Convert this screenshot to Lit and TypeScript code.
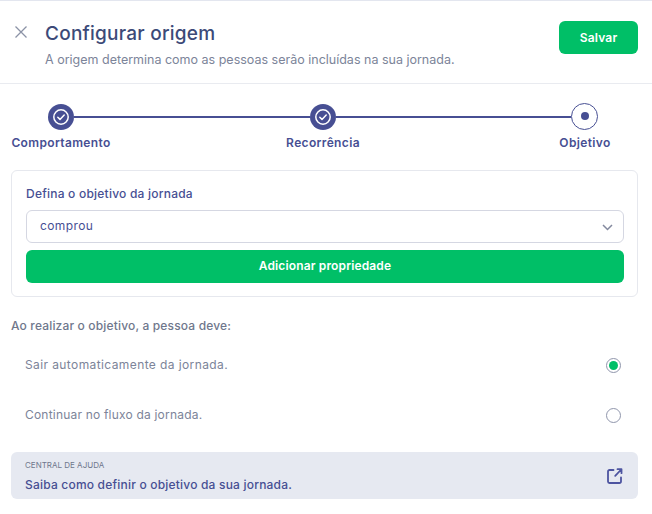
import { LitElement, html, css } from "lit";
import { customElement } from "lit/decorators.js";

const check = html`<svg viewBox="0 0 26 26" width="26" height="26" fill="none" stroke="#fff"><circle cx="13" cy="13" r="7.2" stroke-width="1.5"/><path d="M9.8 13.2l2.2 2.2 4.2-4.4" stroke-width="1.5" stroke-linecap="round" stroke-linejoin="round"/></svg>`;

@customElement("app-root")
export class AppRoot extends LitElement {
  static styles = css`
    :host { display: block; width: 652px; height: 514px; background: #fff; font-family: Inter, "Noto Sans", sans-serif; overflow: hidden; }
    * { box-sizing: border-box; }
    .header { height: 84px; border-top: 1px solid #e3e6ef; border-bottom: 1px solid #e9ebf0; display: flex; padding: 0 14px 0 14px; }
    .close { width: 14px; height: 14px; margin-top: 24px; flex: none; }
    .titles { margin-left: 17px; flex: 1; padding-top: 21px; }
    h1 { margin: 0; font-size: 19px; line-height: 24px; font-weight: 500; color: #3c4a78; letter-spacing: 0.24px; }
    .sub { margin-top: 6px; font-size: 12.5px; line-height: 16px; color: #7c8499; letter-spacing: 0px; }
    .save { width: 79px; height: 33px; margin-top: 20px; border-radius: 6px; background: #00bf67; color: #fff; font-size: 12px; font-weight: 600; letter-spacing: 0.2px; display: flex; align-items: center; justify-content: center; }
    .stepper { padding: 19px 14px 0 11px; }
    .track { display: flex; align-items: center; padding-left: 37px; padding-right: 40px; height: 27px; }
    .dot { width: 26px; height: 26px; border-radius: 50%; background: #474f93; flex: none; display: flex; }
    .dot.cur { width: 27px; height: 27px; background: #fff; border: 1px solid #474f93; align-items: center; justify-content: center; margin-top: -1px; }
    .dot.cur i { width: 8px; height: 8px; border-radius: 50%; background: #474f93; }
    .line { flex: 1; height: 2px; background: #474f93; margin-top: 1px; }
    .labels { display: flex; justify-content: space-between; margin: 5px 3px 0 0; }
    .labels span { width: 100px; text-align: center; font-size: 12px; line-height: 16px; font-weight: 600; color: #474f93; white-space: nowrap; letter-spacing: 0.35px; }
    .card { margin: 19px 14px 0 11px; height: 127px; border: 1px solid #e6e8ee; border-radius: 6px; padding: 15px 13px 0 14px; }
    .card label { display: block; font-size: 12px; line-height: 16px; font-weight: 450; color: #474f93; letter-spacing: 0.22px; }
    .select { margin-top: 8px; height: 33px; border: 1px solid #d5d7e2; border-radius: 6px; display: flex; align-items: center; justify-content: space-between; padding: 0 10px 0 13px; font-size: 12px; color: #474f93; letter-spacing: 0.4px; }
    .val { padding-bottom: 3px; }
    .add { margin-top: 7px; padding-bottom: 2px; height: 33px; border-radius: 6px; background: #00bf67; color: #fff; font-size: 12px; font-weight: 600; letter-spacing: 0.14px; display: flex; align-items: center; justify-content: center; }
    .q { margin: 21px 14px 0 11px; font-size: 12px; line-height: 16px; font-weight: 450; color: #6f778c; letter-spacing: 0.16px; }
    .opts { margin-top: 6px; }
    .opt { margin: 0 14px 0 25px; height: 50px; display: flex; align-items: center; justify-content: space-between; font-size: 12px; color: #7c8499; padding-right: 17px; letter-spacing: 0.4px; }
    .opt.b { letter-spacing: 0.2px; }
    .opt .t { padding-bottom: 1px; }
    .radio { width: 15px; height: 15px; border-radius: 50%; border: 1px solid #9096ac; background: #fff; display: flex; align-items: center; justify-content: center; }
    .radio i { width: 9px; height: 9px; border-radius: 50%; background: #00bf67; }
    .help { margin: 12px 14px 0 11px; height: 47px; border-radius: 6px; background: #e6e9f1; display: flex; justify-content: space-between; align-items: center; padding: 0 15px 0 14px; }
    .help small { display: block; font-size: 8px; line-height: 11px; color: #6f778c; text-transform: uppercase; margin-bottom: 6px; }
    .help a { display: block; font-size: 12px; line-height: 15px; font-weight: 500; color: #474f93; letter-spacing: 0.2px; }
  `;

  render() {
    return html`
      <div class="header">
        <svg class="close" viewBox="0 0 14 14" fill="none" stroke="#8b92a6" stroke-width="1.3"><path d="M1.5 1.5l11 11M12.5 1.5l-11 11"/></svg>
        <div class="titles">
          <h1>Configurar origem</h1>
          <div class="sub">A origem determina como as pessoas serão incluídas na sua jornada.</div>
        </div>
        <div class="save">Salvar</div>
      </div>
      <div class="stepper">
        <div class="track">
          <div class="dot">${check}</div>
          <div class="line"></div>
          <div class="dot">${check}</div>
          <div class="line"></div>
          <div class="dot cur"><i></i></div>
        </div>
        <div class="labels"><span>Comportamento</span><span>Recorrência</span><span>Objetivo</span></div>
      </div>
      <div class="card">
        <label>Defina o objetivo da jornada</label>
        <div class="select"><span class="val">comprou</span>
          <svg width="12" height="8" viewBox="0 0 12 8" fill="none" stroke="#83899e" stroke-width="1.5"><path d="M2 2l4.5 4.5L11 2"/></svg>
        </div>
        <div class="add">Adicionar propriedade</div>
      </div>
      <div class="q">Ao realizar o objetivo, a pessoa deve:</div>
      <div class="opts">
        <div class="opt"><span class="t">Sair automaticamente da jornada.</span><span class="radio"><i></i></span></div>
        <div class="opt b"><span class="t">Continuar no fluxo da jornada.</span><span class="radio"></span></div>
      </div>
      <div class="help">
        <div><small>Central de ajuda</small><a>Saiba como definir o objetivo da sua jornada.</a></div>
        <svg width="16" height="16" viewBox="0 0 16 16" fill="none" stroke="#4d54a0" stroke-width="1.8" stroke-linecap="round" stroke-linejoin="round"><path d="M6.5 2H2.5A1.5 1.5 0 0 0 1 3.5v10A1.5 1.5 0 0 0 2.5 15h10a1.5 1.5 0 0 0 1.5-1.5V9.5"/><path d="M10.5 1.2h4v4M14.2 1.5L8.2 7.8"/></svg>
      </div>
    `;
  }
}
